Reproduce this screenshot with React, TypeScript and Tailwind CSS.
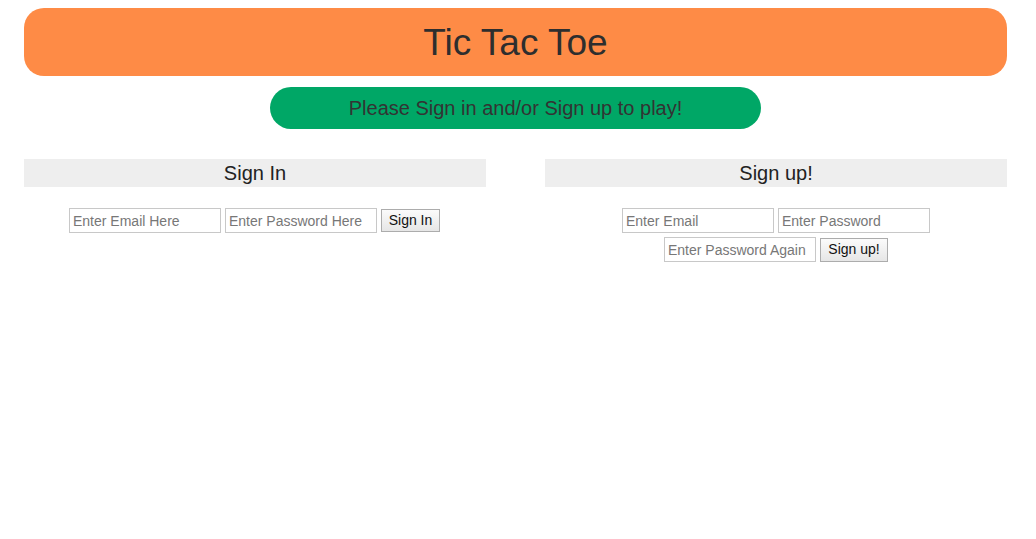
export default function App() {
  return (
    <main className="min-h-screen bg-white pt-2 font-['Liberation_Sans',Arial,sans-serif] text-[#333]">
      <div className="mx-[24px] w-[983px]">
        <header className="flex h-[68px] items-center justify-center rounded-[20px] bg-[#fe8b46]">
          <h1 className="text-[37px] leading-none text-[#2e2e2e]">Tic Tac Toe</h1>
        </header>

        <div className="mt-[11px] flex justify-center">
          <div className="flex h-[42px] w-[491px] items-center justify-center rounded-full bg-[#00a766] text-[20px]">
            Please Sign in and/or Sign up to play!
          </div>
        </div>

        <section className="mt-[30px] flex justify-between">
          <div className="w-[462px]">
            <h2 className="flex h-[28px] items-center justify-center bg-[#eeeeee] text-[20px] text-[#222]">Sign In</h2>
            <form className="mt-[21px] mr-[1px] flex flex-wrap justify-center gap-x-[4px] gap-y-[4px]">
              <input className="h-[25px] w-[152px] border border-[#c8c8c8] px-[3px] text-[14px] placeholder:text-[#777] outline-none" placeholder="Enter Email Here" />
              <input className="h-[25px] w-[152px] border border-[#c8c8c8] px-[3px] text-[14px] placeholder:text-[#777] outline-none" placeholder="Enter Password Here" type="password" />
              <button type="button" className="mt-[1px] h-[23px] w-[59px] border border-[#acacac] bg-gradient-to-b from-[#fbfbfb] to-[#e6e6e6] text-[14px] text-[#111]">Sign In</button>
            </form>
          </div>

          <div className="w-[462px]">
            <h2 className="flex h-[28px] items-center justify-center bg-[#eeeeee] text-[20px] text-[#222]">Sign up!</h2>
            <form className="mt-[21px] flex flex-col items-center gap-y-[4px]">
              <div className="flex gap-x-[4px]">
                <input className="h-[25px] w-[152px] border border-[#c8c8c8] px-[3px] text-[14px] placeholder:text-[#777] outline-none" placeholder="Enter Email" />
                <input className="h-[25px] w-[152px] border border-[#c8c8c8] px-[3px] text-[14px] placeholder:text-[#777] outline-none" placeholder="Enter Password" type="password" />
              </div>
              <div className="flex items-center gap-x-[4px]">
                <input className="h-[25px] w-[152px] border border-[#c8c8c8] px-[3px] text-[14px] placeholder:text-[#777] outline-none" placeholder="Enter Password Again" type="password" />
                <button type="button" className="h-[24px] w-[68px] border border-[#acacac] bg-gradient-to-b from-[#fbfbfb] to-[#e6e6e6] text-[14px] text-[#111]">Sign up!</button>
              </div>
            </form>
          </div>
        </section>
      </div>
    </main>
  );
}
